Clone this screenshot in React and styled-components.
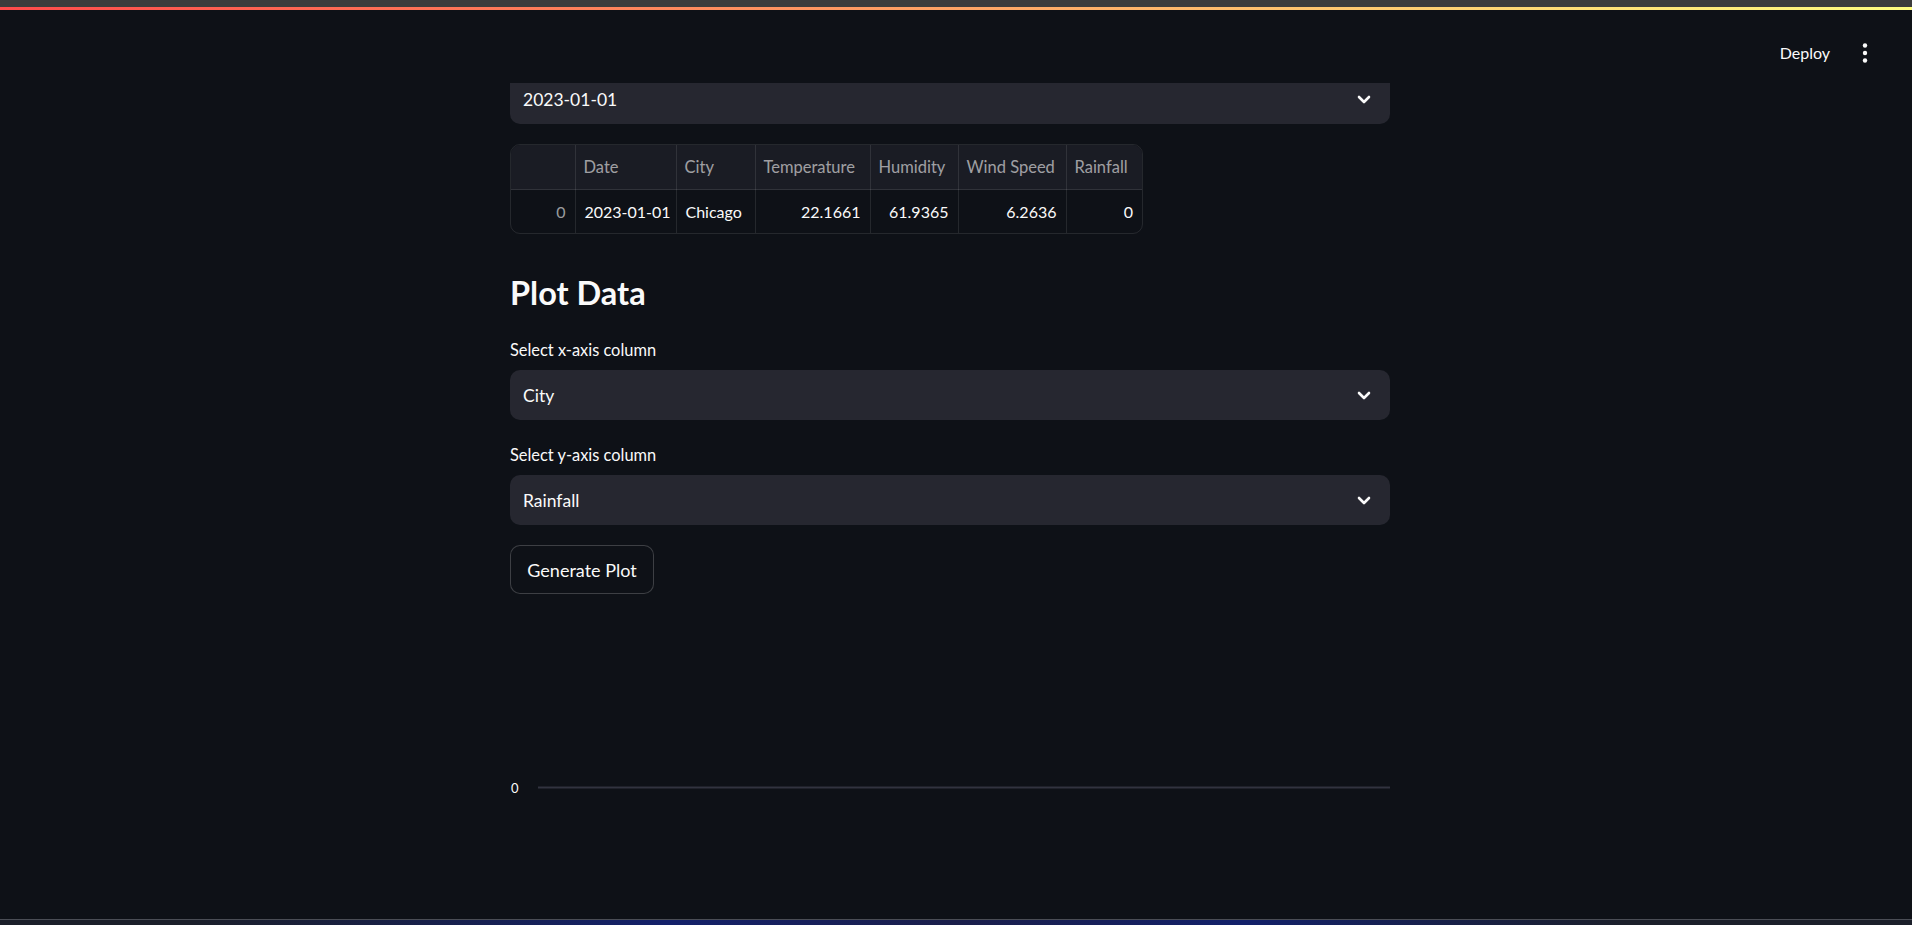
import React from 'react'
import styled, { createGlobalStyle } from 'styled-components'

const GlobalStyle = createGlobalStyle`
    html, body {
        margin: 0;
        padding: 0;
        background: #0e1117;
        overflow: hidden;
    }
    body {
        font-family: Lato, "Noto Sans", sans-serif;
        color: #fafafa;
    }
`;

const columns = [
    { key: 'idx', label: '', width: 64 },
    { key: 'date', label: 'Date', width: 101 },
    { key: 'city', label: 'City', width: 79 },
    { key: 'temp', label: 'Temperature', width: 115, num: true },
    { key: 'hum', label: 'Humidity', width: 88, num: true },
    { key: 'wind', label: 'Wind Speed', width: 108, num: true },
    { key: 'rain', label: 'Rainfall', width: 76, num: true },
];

const rows = [
    { idx: '0', date: '2023-01-01', city: 'Chicago', temp: '22.1661', hum: '61.9365', wind: '6.2636', rain: '0' },
];

function Chevron() {
    return (
        <svg width="14" height="9" viewBox="0 0 14 9">
            <polyline points="2,2 7,7 12,2" fill="none" stroke="#fafafa" strokeWidth="2.6" strokeLinecap="round" strokeLinejoin="round" />
        </svg>
    );
}

function Kebab() {
    return (
        <svg width="6" height="20" viewBox="0 0 6 20">
            <circle cx="3" cy="2.5" r="2.2" fill="#fafafa" />
            <circle cx="3" cy="10" r="2.2" fill="#fafafa" />
            <circle cx="3" cy="17.5" r="2.2" fill="#fafafa" />
        </svg>
    );
}

function Select({ value, cut }) {
    return (
        <SelectBox cut={cut}>
            <span>{value}</span>
            <Chevron />
        </SelectBox>
    );
}

function App() {
    return (
        <Page>
            <GlobalStyle />
            <ChromeBar />
            <Decoration />
            <Header>
                <DeployButton>Deploy</DeployButton>
                <MenuButton><Kebab /></MenuButton>
            </Header>
            <Main>
                <Block>
                    {/* top of this select is scrolled under the header */}
                    <Select value="2023-01-01" cut />
                    <DataFrame>
                        <table>
                            <colgroup>
                                {columns.map(c => <col key={c.key} style={{ width: c.width }} />)}
                            </colgroup>
                            <thead>
                                <tr>
                                    {columns.map(c => <HeadCell key={c.key}>{c.label}</HeadCell>)}
                                </tr>
                            </thead>
                            <tbody>
                                {rows.map((r, i) => (
                                    <tr key={i}>
                                        {columns.map(c => (
                                            <BodyCell key={c.key} num={c.num || c.key === 'idx'} muted={c.key === 'idx'}>
                                                {r[c.key]}
                                            </BodyCell>
                                        ))}
                                    </tr>
                                ))}
                            </tbody>
                        </table>
                    </DataFrame>
                    <Subheader>Plot Data</Subheader>
                    <Field>
                        <Label>Select x-axis column</Label>
                        <Select value="City" />
                    </Field>
                    <Field>
                        <Label>Select y-axis column</Label>
                        <Select value="Rainfall" />
                    </Field>
                    <ButtonRow>
                        <Button>Generate Plot</Button>
                    </ButtonRow>
                    <Chart viewBox="0 0 880 200" width="880" height="200">
                        <text x="1" y="179" fill="#fafafa" fontSize="13" fontFamily="Lato, sans-serif">0</text>
                        <line x1="28" y1="173.5" x2="880" y2="173.5" stroke="#31333f" strokeWidth="2" />
                    </Chart>
                </Block>
            </Main>
            <BottomBar />
        </Page>
    );
}

const Page = styled.div`
    height: 925px;
    display: flex;
    flex-direction: column;
    background: #0e1117;
`;

const ChromeBar = styled.div`
    height: 7px;
    background: #3c3c3c;
`;

const Decoration = styled.div`
    height: 3px;
    background: linear-gradient(90deg, rgb(255, 75, 75), rgb(255, 253, 128));
`;

const Header = styled.header`
    height: 73px;
    display: flex;
    justify-content: flex-end;
    align-items: flex-start;
    padding: 31px 42px 0 0;
    box-sizing: border-box;
    gap: 30px;
`;

const DeployButton = styled.div`
    font-size: 16px;
    line-height: 24px;
    color: #fafafa;
`;

const MenuButton = styled.div`
    height: 24px;
    width: 10px;
    display: flex;
    align-items: center;
    justify-content: center;
`;

const Main = styled.main`
    flex: 1;
    overflow: hidden;
    display: flex;
    justify-content: center;
    padding-right: 12px;
`;

const Block = styled.div`
    width: 880px;
    display: flex;
    flex-direction: column;
    gap: 20px;
`;

const SelectBox = styled.div`
    height: ${p => (p.cut ? '41px' : '50px')};
    background: #262730;
    border-radius: ${p => (p.cut ? '0 0 10px 10px' : '10px')};
    display: flex;
    align-items: center;
    justify-content: space-between;
    padding: ${p => (p.cut ? '0 19px 9px 13px' : '0 19px 0 13px')};
    box-sizing: border-box;
    font-size: 17.5px;
    color: #fafafa;
    svg {
        display: block;
    }
`;

const DataFrame = styled.div`
    align-self: flex-start;
    border: 1px solid rgba(250, 250, 250, 0.1);
    border-radius: 10px;
    overflow: hidden;
    table {
        border-collapse: collapse;
        table-layout: fixed;
        width: 630px;
    }
    tr > *:last-child {
        border-right: none;
    }
    tbody tr:last-child td {
        border-bottom: none;
    }
`;

const HeadCell = styled.th`
    height: 44px;
    padding: 0 8px;
    text-align: left;
    font-weight: 400;
    font-size: 16.5px;
    color: rgba(250, 250, 250, 0.6);
    background: #1a1c24;
    border-right: 1px solid rgba(250, 250, 250, 0.1);
    border-bottom: 1px solid rgba(250, 250, 250, 0.1);
    white-space: nowrap;
`;

const BodyCell = styled.td`
    height: 43px;
    padding: 0 9px;
    text-align: ${p => (p.num ? 'right' : 'left')};
    font-size: 16px;
    color: ${p => (p.muted ? 'rgba(250, 250, 250, 0.6)' : '#fafafa')};
    border-right: 1px solid rgba(250, 250, 250, 0.1);
    white-space: nowrap;
`;

const Subheader = styled.h3`
    margin: 0;
    height: 61px;
    padding-top: 20px;
    box-sizing: border-box;
    font-size: 32.5px;
    line-height: 38px;
    font-weight: 700;
    color: #fafafa;
`;

const Field = styled.div`
    display: flex;
    flex-direction: column;
`;

const Label = styled.label`
    height: 35px;
    padding-top: 5px;
    box-sizing: border-box;
    font-size: 16.4px;
    line-height: 20px;
    color: #fafafa;
`;

const ButtonRow = styled.div`
    display: flex;
`;

const Button = styled.button`
    height: 49px;
    width: 144px;
    background: #0e1117;
    border: 1px solid rgba(250, 250, 250, 0.2);
    border-radius: 10px;
    color: #fafafa;
    font-family: Lato, "Noto Sans", sans-serif;
    font-size: 18px;
    padding: 0;
    cursor: pointer;
`;

const Chart = styled.svg`
    display: block;
`;

const BottomBar = styled.div`
    height: 6px;
    border-top: 1px solid #4a4d55;
    box-sizing: border-box;
    background: linear-gradient(90deg, #1b1f2a 10%, #13206a 35%, #1a1e4a 50%, #12206a 65%, #1b1f2a 85%);
`;

export default App;
